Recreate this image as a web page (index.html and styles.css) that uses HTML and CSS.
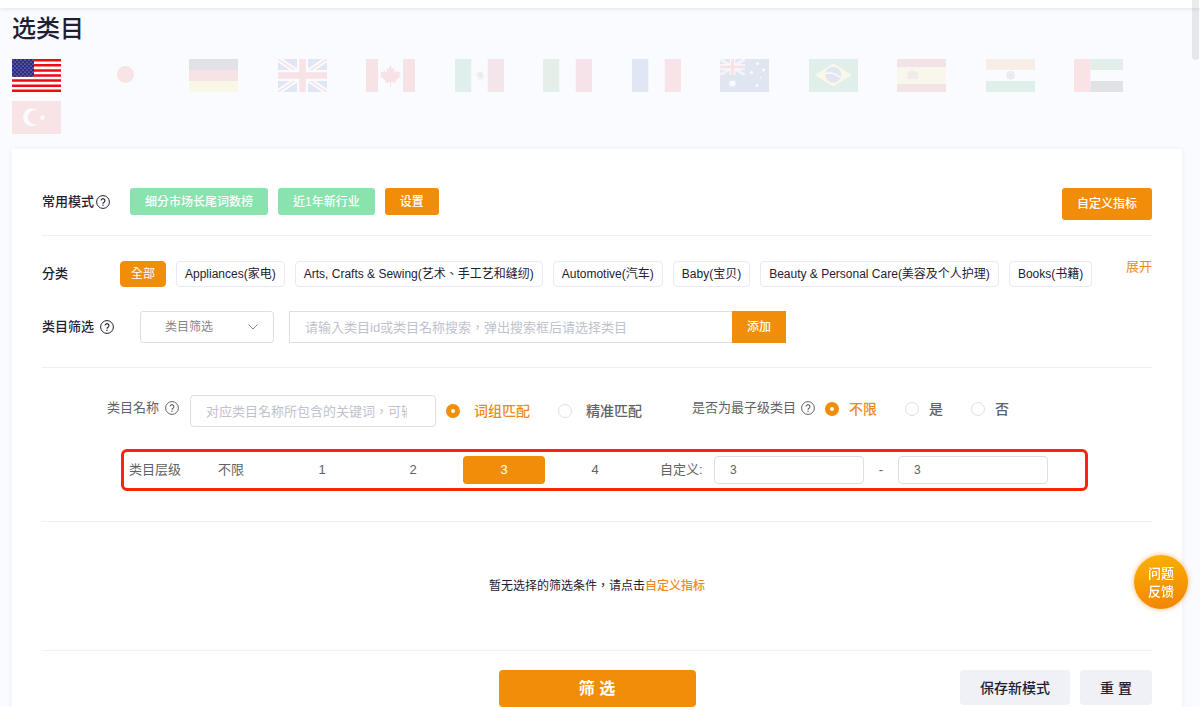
FILE: index.html
```html
<!DOCTYPE html>
<html lang="zh-Hant">
<head>
<meta charset="utf-8">
<meta name="viewport" content="width=device-width, initial-scale=1">
<title>选类目</title>
<link rel="stylesheet" href="styles.css">
</head>
<body>
<svg class="defs" aria-hidden="true">
  <symbol id="help" viewBox="0 0 14 14">
    <circle cx="7" cy="7" r="6.4" fill="none" stroke="currentColor"/>
    <path d="M5.1 5.6a1.9 1.9 0 1 1 2.9 1.6c-.7.4-1 .8-1 1.5" fill="none" stroke="currentColor" stroke-width="1.1"/>
    <circle cx="7" cy="10.2" r=".7" fill="currentColor"/>
  </symbol>
  <symbol id="jack" viewBox="0 0 49 33">
    <path fill="#1238a0" d="M0 0h49v33H0z"/>
    <path stroke="#fff" stroke-width="5.500" d="M0 0l49 33M49 0L0 33"/>
    <path stroke="#e01818" stroke-width="1.600" d="M0 0l49 33M49 0L0 33"/>
    <path stroke="#fff" stroke-width="11" d="M24.500 0v33M0 16.500h49"/>
    <path stroke="#e01818" stroke-width="6.500" d="M24.500 0v33M0 16.500h49"/>
  </symbol>
  <pattern id="stars" width="4" height="4" patternUnits="userSpaceOnUse">
    <circle cx="1" cy="1" r=".6" fill="#ccd"/><circle cx="3" cy="3" r=".6" fill="#ccd"/>
  </pattern>
</svg>

<div class="topbar"></div>
<div class="scroll-thumb"></div>

<main class="page">
  <h1 class="title">选类目</h1>

  <div class="flags">
    <button class="flag active" aria-label="美国"><svg viewBox="0 0 49 33">
      <path fill="#fff" d="M0 0h49v33H0z"/>
      <path stroke="#ee0a12" stroke-width="2.540" d="M0 1.270h49M0 6.350h49M0 11.420h49M0 16.500h49M0 21.580h49M0 26.650h49M0 31.730h49"/>
      <path fill="#2b2b86" d="M0 0h22v17.800H0z"/><path fill="url(#stars)" d="M0 0h22v17.800H0z"/>
    </svg></button>
    <button class="flag" aria-label="日本"><svg viewBox="0 0 49 33"><circle cx="24.500" cy="15.500" r="8.500" fill="#e81818"/></svg></button>
    <button class="flag" aria-label="德国"><svg viewBox="0 0 49 33"><path fill="#111" d="M0 0h49v11H0z"/><path fill="#e01818" d="M0 11h49v11H0z"/><path fill="#f5e02a" d="M0 22h49v11H0z"/></svg></button>
    <button class="flag" aria-label="英国"><svg viewBox="0 0 49 33"><use href="#jack"/></svg></button>
    <button class="flag" aria-label="加拿大"><svg viewBox="0 0 49 33"><path fill="#fff" d="M12 0h25v33H12z"/><path fill="#e01818" d="M0 0h12v33H0zM37 0h12v33H37zM24.500 6l2 4 2.200-1.200-.8 5.400 2.800-2.800.7 1.700 3.400-.5-1.200 3.400 1.400.9-5.500 4.600.6 2.200-5.200-.8.100 5.100h-1l.1-5.100-5.200.8.6-2.200-5.500-4.600 1.400-.9-1.200-3.400 3.400.5.7-1.700 2.800 2.800-.8-5.400L22.500 10z"/></svg></button>
    <button class="flag" aria-label="墨西哥"><svg viewBox="0 0 49 33"><path fill="#fff" d="M16 0h17v33H16z"/><path fill="#0a8a4a" d="M0 0h16.300v33H0z"/><path fill="#b83a44" d="M32.700 0H49v33H32.700z"/><path fill="#a98" d="M21 14l3-1.500 3 .5 2 3-.5 3.500-2.500 1.500-4-1 1.500-1.500-2-1.500z"/><circle cx="25.500" cy="16" r="2" fill="#654"/></svg></button>
    <button class="flag" aria-label="意大利"><svg viewBox="0 0 49 33"><path fill="#fff" d="M16 0h17v33H16z"/><path fill="#2a9048" d="M0 0h16.300v33H0z"/><path fill="#d8203c" d="M32.700 0H49v33H32.700z"/></svg></button>
    <button class="flag" aria-label="法国"><svg viewBox="0 0 49 33"><path fill="#fff" d="M16 0h17v33H16z"/><path fill="#0c3c9c" d="M0 0h16.300v33H0z"/><path fill="#ec1c24" d="M32.700 0H49v33H32.700z"/></svg></button>
    <button class="flag" aria-label="澳大利亚"><svg viewBox="0 0 49 33"><path fill="#0c3480" d="M0 0h49v33H0z"/><svg width="25" height="16" viewBox="0 0 49 33" preserveAspectRatio="none"><use href="#jack"/></svg>
      <path fill="#fff" d="M12.500 20l1 2.500 2.500-1-1 2.400 2 1.600-2.600.3.100 2.700-2-1.800-2 1.800.1-2.700-2.600-.3 2-1.600-1-2.400 2.500 1z"/>
      <g fill="#fff"><circle cx="37.500" cy="4.500" r="1.500"/><circle cx="31.500" cy="13.500" r="1.500"/><circle cx="43.500" cy="11" r="1.500"/><circle cx="37" cy="26.500" r="1.500"/><circle cx="40.500" cy="18.500" r=".8"/></g></svg></button>
    <button class="flag" aria-label="巴西"><svg viewBox="0 0 49 33"><path fill="#169048" d="M0 0h49v33H0z"/><path fill="#fce03c" d="M24.500 4.500L42.500 16l-18 11.500L6 16z"/><circle cx="24.300" cy="15.800" r="8" fill="#1c3c90"/><path d="M16.500 14.500c6-1.500 11 .5 15 4" fill="none" stroke="#fff" stroke-width="1.500"/></svg></button>
    <button class="flag" aria-label="西班牙"><svg viewBox="0 0 49 33"><path fill="#b01c2c" d="M0 0h49v33H0z"/><path fill="#f8d44c" d="M0 8h49v17H0z"/><path fill="#a07860" d="M10 13h2v-1h2l1-2 1 2h2v1h3v7H10z"/><path fill="#b04050" d="M12 14h3v5h-3zM16 12h2v4h-2z"/></svg></button>
    <button class="flag" aria-label="印度"><svg viewBox="0 0 49 33"><path fill="#fff" d="M0 11h49v11H0z"/><path fill="#f08030" d="M0 0h49v11H0z"/><path fill="#108a44" d="M0 22h49v11H0z"/><circle cx="24.500" cy="16.300" r="3.800" fill="#889" stroke="#447" stroke-width="1"/><circle cx="24.500" cy="16.300" r="1.200" fill="#225"/></svg></button>
    <button class="flag" aria-label="阿联酋"><svg viewBox="0 0 49 33"><path fill="#fff" d="M16 11h33v11H16z"/><path fill="#fb1c2c" d="M0 0h16.500v33H0z"/><path fill="#108444" d="M16.500 0H49v11H16.500z"/><path fill="#111" d="M16.500 22H49v11H16.500z"/></svg></button>
    <button class="flag" aria-label="土耳其"><svg viewBox="0 0 49 33"><path fill="#e81c24" d="M0 0h49v33H0z"/><path fill="#fff" d="M26 9.500a9 9 0 1 0 0 13.500 7.300 7.300 0 1 1 0-13.500zM30.500 13l.9 2.300 2.400.1-1.800 1.500.6 2.400-2.100-1.300-2 1.400.5-2.500-1.900-1.500 2.500-.1z"/></svg></button>
  </div>

  <div class="card">
    <section class="section modes">
      <span class="row-label">常用模式<svg class="help"><use href="#help"/></svg></span>
      <div class="mode-list">
        <button class="btn green">细分市场长尾词数榜</button>
        <button class="btn green">近1年新行业</button>
        <button class="btn orange">设置</button>
      </div>
      <button class="btn orange tall push">自定义指标</button>
    </section>

    <section class="section categories">
      <div class="row">
        <span class="row-label short">分类</span>
        <div class="chips">
          <button class="chip on">全部</button>
          <button class="chip">Appliances(家电)</button>
          <button class="chip">Arts, Crafts &amp; Sewing(艺术、手工艺和缝纫)</button>
          <button class="chip">Automotive(汽车)</button>
          <button class="chip">Baby(宝贝)</button>
          <button class="chip">Beauty &amp; Personal Care(美容及个人护理)</button>
          <button class="chip">Books(书籍)</button>
        </div>
        <a class="link expand" href="#">展开</a>
      </div>
      <div class="row">
        <label class="row-label wide" for="cat">类目筛选<svg class="help spaced"><use href="#help"/></svg></label>
        <span class="select-wrap">
          <select class="select" id="cat"><option>类目筛选</option></select>
          <svg class="chevron" viewBox="0 0 10 6"><path d="M.5.5L5 5 9.500.5" fill="none" stroke="#85878f"/></svg>
        </span>
        <div class="search">
          <input class="field square" type="text" aria-label="类目搜索" placeholder="请输入类目id或类目名称搜索，弹出搜索框后请选择类目">
          <button class="btn orange tall joined">添加</button>
        </div>
      </div>
    </section>

    <section class="section filters">
      <div class="names">
        <label class="name-label" for="name">类目名称<svg class="help spaced"><use href="#help"/></svg></label>
        <input class="field name-field" id="name" type="text" placeholder="对应类目名称所包含的关键词，可输入多个">
        <div class="radios match">
          <label class="radio"><input type="radio" name="match" checked><span>词组匹配</span></label>
          <label class="radio"><input type="radio" name="match"><span>精准匹配</span></label>
        </div>
        <span class="name-label leaf">是否为最子级类目<svg class="help near"><use href="#help"/></svg></span>
        <div class="radios">
          <label class="radio"><input type="radio" name="leaf" checked><span>不限</span></label>
          <label class="radio"><input type="radio" name="leaf"><span>是</span></label>
          <label class="radio"><input type="radio" name="leaf"><span>否</span></label>
        </div>
      </div>
      <div class="levels">
        <span class="level-label">类目层级</span>
        <div class="level-list">
          <button class="level">不限</button>
          <button class="level">1</button>
          <button class="level">2</button>
          <button class="level on">3</button>
          <button class="level">4</button>
        </div>
        <label class="custom" for="from">自定义:</label>
        <input class="field small" id="from" type="text" value="3">
        <span class="dash">-</span>
        <input class="field small" type="text" aria-label="最大层级" value="3">
      </div>
    </section>

    <section class="section empty">
      <p>暂无选择的筛选条件，请点击<a class="link strong" href="#">自定义指标</a></p>
    </section>

    <div class="actions">
      <button class="submit">筛 选</button>
      <div class="side">
        <button class="plain">保存新模式</button>
        <button class="plain">重 置</button>
      </div>
    </div>
  </div>
</main>

<button class="feedback">问题<br>反馈</button>
</body>
</html>
```

FILE: styles.css
```css
:root {
  --orange: #f18d09;
  --ink: #1f2033;
  --grey: #606266;
  --line: #dcdfe6;
  --rule: #eff0f4;
}

* { box-sizing: border-box; }

html { scrollbar-width: none; }

body {
  margin: 0;
  background: #fafbfe;
  color: var(--ink);
  font: 13px/20px "Liberation Sans", "Noto Sans CJK TC", sans-serif;
}

button, input, select { font: inherit; color: inherit; }
button { border: 0; padding: 0; background: none; cursor: pointer; white-space: nowrap; }

.defs { position: absolute; width: 0; height: 0; }

.topbar { height: 8px; background: #fff; box-shadow: 0 1px 4px rgba(0, 40, 80, .1); }

.scroll-thumb {
  position: fixed;
  top: 0;
  right: 1px;
  width: 7px;
  height: 60px;
  border-radius: 0 0 4px 4px;
  background: rgba(0, 0, 0, .08);
}

.title { margin: 0; padding: 5px 12px 0; font-size: 24px; line-height: 32px; font-weight: 500; }

.flags { display: flex; flex-wrap: wrap; row-gap: 9px; padding: 14px 8px 15px 12px; }
.flag { width: 7.5%; height: 33px; text-align: left; opacity: .1; }
.flag.active { opacity: 1; }
.flag svg { display: block; width: 49px; height: 33px; }
.flag svg svg { width: 25px; height: 16px; }

.card {
  margin: 0 18px 0 12px;
  padding: 39px 30px 30px;
  background: #fff;
  box-shadow: 0 0 6px rgba(30, 40, 80, .06);
}

.section { border-bottom: 1px solid var(--rule); }

.row-label { display: flex; align-items: center; flex: none; width: 88px; font-weight: 500; }
.row-label.short { width: 78px; }
.row-label.wide { width: 98px; }

.help { flex: none; width: 14px; height: 14px; margin-left: 2px; }
.help.spaced { margin-left: 6px; }
.help.near { margin-left: 5px; }

.btn {
  height: 27px;
  padding: 0 15px;
  border-radius: 3px;
  color: #fff;
  font-size: 12px;
  font-weight: 500;
}
.btn.green { background: #8ae2ae; }
.btn.orange { background: var(--orange); }
.btn.tall { height: 32px; }
.btn.joined { flex: none; border-radius: 0; }
.push { margin-left: auto; }

.modes { display: flex; align-items: flex-start; padding-bottom: 15px; }
.modes .row-label { height: 28px; }
.mode-list { display: flex; gap: 10px; }

.categories { display: flex; flex-direction: column; gap: 24px; padding: 25px 0 24px; }
.row { display: flex; align-items: center; }

.chips { display: flex; gap: 10px; }
.chip {
  height: 26px;
  padding: 0 8px;
  border: 1px solid #e9eaf3;
  border-radius: 4px;
  font-size: 12px;
}
.chip.on { padding: 0 10px; border-color: var(--orange); background: var(--orange); color: #fff; }

.link { color: #ee8a1d; text-decoration: none; }
.expand { align-self: flex-start; margin-left: auto; line-height: 12px; }
.strong { font-weight: 500; }

.select-wrap { position: relative; width: 134px; margin-right: 15px; }
.select {
  display: block;
  width: 100%;
  height: 32px;
  padding: 0 24px;
  border: 1px solid var(--line);
  border-radius: 3px;
  background: #fff;
  color: #85878c;
  font-size: 12px;
  appearance: none;
}
.chevron { position: absolute; top: 13px; right: 16px; width: 10px; height: 6px; pointer-events: none; }

.search { display: flex; width: 497px; }

.field {
  min-width: 0;
  height: 32px;
  padding: 0 15px;
  border: 1px solid var(--line);
  border-radius: 4px;
  background: #fff;
  color: var(--grey);
}
.field::placeholder { color: #c0c2cc; opacity: 1; }
.field.square { flex: 1; border-right: 0; border-radius: 0; }
.field.small { width: 150px; height: 28px; font-size: 12px; }
.name-field { width: 246px; padding-right: 28px; }

.filters { padding: 27px 0 30px; color: var(--grey); }
.names { display: flex; align-items: flex-start; padding-left: 65px; }
.name-label { display: flex; align-items: center; width: 83px; height: 26px; white-space: nowrap; }
.name-label.leaf { width: 133px; }

.radios { display: flex; gap: 28px; height: 27px; font-size: 14px; font-weight: 500; }
.radios.match { width: 256px; height: 32px; padding-left: 10px; }
.radio { display: flex; align-items: center; gap: 14px; white-space: nowrap; }
.radios:not(.match) .radio { gap: 10px; }
.radio input {
  flex: none;
  width: 14px;
  height: 14px;
  margin: 0;
  border: 1px solid var(--line);
  border-radius: 50%;
  background: #fff;
  appearance: none;
}
.radio input:checked { border: 5px solid var(--orange); }
.radio input:checked + span { color: #ee8a1d; }

.levels {
  display: flex;
  align-items: center;
  width: 967px;
  max-width: 100%;
  height: 42px;
  margin: 22px 0 0 79px;
  padding-left: 5px;
  border: 3px solid #fb2408;
  border-radius: 6px;
}
.level-label { width: 61px; }
.level-list { display: flex; gap: 9px; }
.level { width: 82px; height: 28px; border-radius: 4px; }
.level.on { background: var(--orange); color: #fff; }
.custom { width: 54px; margin-left: 24px; }
.dash { width: 34px; text-align: center; }

.empty { display: flex; align-items: center; justify-content: center; height: 129px; font-size: 12px; }
.empty p { margin: 0; }

.actions { display: grid; grid-template-columns: 1fr auto 1fr; align-items: start; padding-top: 19px; }
.submit {
  grid-column: 2;
  width: 197px;
  height: 37px;
  border-radius: 4px;
  background: var(--orange);
  color: #fff;
  font-size: 16px;
  font-weight: 700;
}
.side { display: flex; justify-content: flex-end; gap: 10px; }
.plain {
  height: 35px;
  padding: 0 20px;
  border-radius: 4px;
  background: #f0f1f6;
  font-size: 14px;
  font-weight: 500;
}

.feedback {
  position: fixed;
  right: 12px;
  top: 555px;
  width: 54px;
  height: 54px;
  padding-top: 2px;
  border-radius: 50%;
  background: linear-gradient(170deg, #fab300, #f28205);
  box-shadow: 0 0 5px rgba(242, 130, 5, .6);
  color: #fff;
  line-height: 18px;
  font-weight: 500;
}
```
